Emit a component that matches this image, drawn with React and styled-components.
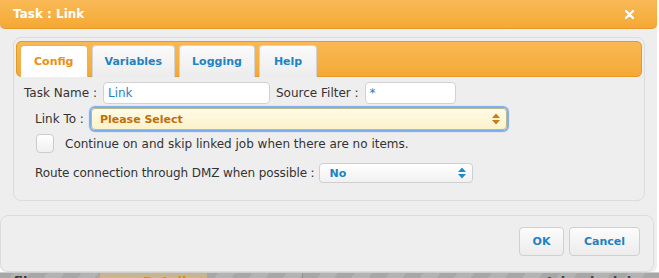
import React from 'react';
import styled, { createGlobalStyle } from 'styled-components';

const Global = createGlobalStyle`
  html, body { margin: 0; padding: 0; background: #ffffff; }
  body { font-family: "DejaVu Sans", Verdana, sans-serif; }
  * { box-sizing: border-box; }
`;

const Page = styled.div`
  width: 659px;
  height: 278px;
  overflow: hidden;
  display: flex;
  flex-direction: column;
  background: #ffffff;
`;

const Dialog = styled.div`
  flex: none;
  width: 657px;
  height: 272px;
  background: #eeeeee;
  display: flex;
  flex-direction: column;
  border-radius: 0 0 6px 6px;
`;

const TitleBar = styled.div`
  flex: none;
  height: 29px;
  display: flex;
  align-items: center;
  justify-content: space-between;
  padding: 0 23px 0 13px;
  background: linear-gradient(#f9b956, #f4a935);
  border-bottom: 1px solid #e49a25;
  border-radius: 0 0 5px 5px;
  color: #ffffff;
  font-weight: bold;
  font-size: 12px;
`;

const Close = styled.svg`
  display: block;
`;

const Body = styled.div`
  padding: 8px 12px 0 13px;
`;

const Panel = styled.div`
  height: 164px;
  border: 1px solid #dcdcdc;
  border-radius: 8px;
  padding: 3px 2px;
  background: #eeeeee;
`;

const TabBar = styled.div`
  height: 36px;
  display: flex;
  align-items: flex-end;
  gap: 4px;
  padding: 3px 3px 0 3px;
  background: linear-gradient(#f9b956, #f4a935);
  border: 1px solid #e49a25;
  border-radius: 5px;
`;

const Tab = styled.div`
  height: 32px;
  margin-bottom: -1px;
  padding: 0 ${p => p.$pad}px;
  display: flex;
  align-items: center;
  font-size: 11px;
  font-weight: bold;
  border: 1px solid ${p => (p.$active ? '#f1b04e' : '#d3d3d3')};
  border-bottom: none;
  border-radius: 4px 4px 0 0;
  color: ${p => (p.$active ? '#eb8f14' : '#1f83c0')};
  background: ${p => (p.$active ? '#ffffff' : 'linear-gradient(#fbfbfb, #ececec)')};
`;

const Form = styled.div`
  display: flex;
  flex-direction: column;
  padding: 5px 0 0 8px;
`;

const Row = styled.div`
  display: flex;
  align-items: center;
  height: ${p => p.$h}px;
  margin-top: ${p => p.$mt || 0}px;
  padding-left: ${p => p.$indent || 0}px;
`;

const Label = styled.span`
  font-size: 12px;
  color: #333333;
  white-space: nowrap;
  letter-spacing: ${p => p.$ls || 0}px;
  margin-right: ${p => p.$gap}px;
`;

const Input = styled.div`
  width: ${p => p.$w}px;
  height: 22px;
  margin-right: ${p => p.$mr || 0}px;
  background: #ffffff;
  border: 1px solid #d2d2d2;
  border-radius: 4px;
  padding: 0 4px;
  display: flex;
  align-items: center;
  font-size: 12px;
  color: #1f83c0;
`;

const Select = styled.div`
  position: relative;
  width: ${p => p.$w}px;
  height: ${p => p.$h}px;
  border-radius: 4px;
  padding: 0 ${p => p.$pad}px;
  display: flex;
  align-items: center;
  font-size: 11px;
  font-weight: bold;
  color: ${p => (p.$focus ? '#c06f08' : '#1f83c0')};
  background: ${p => (p.$focus ? 'linear-gradient(#fefae6, #fcf2cb)' : 'linear-gradient(#ffffff, #f1f1f1)')};
  border: 1px solid ${p => (p.$focus ? '#b9b98e' : '#cfcfcf')};
  box-shadow: ${p => (p.$focus ? '0 0 1px 2px rgba(102,160,235,0.85)' : 'none')};
`;

const Arrows = styled.svg`
  position: absolute;
  right: 6px;
  top: 50%;
  transform: translateY(-50%);
`;

const Check = styled.div`
  width: 18px;
  height: 19px;
  margin: 0 11px 0 1px;
  border: 1px solid #cccccc;
  border-radius: 4px;
  background: linear-gradient(#ffffff, #f0f0f0);
`;

const Footer = styled.div`
  margin-top: 14px;
  margin-right: 3px;
  flex: 1;
  border: 1px solid #dcdcdc;
  border-radius: 8px;
  display: flex;
  justify-content: flex-end;
  align-items: flex-start;
  gap: 5px;
  padding: 11px 13px 0 0;
`;

const Button = styled.div`
  width: ${p => p.$w}px;
  height: 29px;
  display: flex;
  align-items: center;
  justify-content: center;
  border: 1px solid #d0d0d0;
  border-radius: 4px;
  background: linear-gradient(#fcfcfc, #ececec);
  color: #1f83c0;
  font-size: 11px;
  font-weight: bold;
`;

const Backdrop = styled.div`
  flex: none;
  height: 6px;
  display: flex;
  overflow: hidden;
  border-top: 1px solid #cfcfcf;
  background: repeating-linear-gradient(-55deg, #a7a7a7 0 14px, #b3b3b3 14px 28px);
`;

const Seg = styled.div`
  flex: none;
  width: ${p => p.$w}px;
  background: ${p => p.$bg || 'transparent'};
  border-right: ${p => (p.$divider ? '1px solid #8e8e8e' : 'none')};
  color: ${p => p.$color || '#333'};
  font-size: 13px;
  font-weight: bold;
  line-height: 18px;
  white-space: nowrap;
  overflow: hidden;
  padding-left: ${p => p.$pl || 0}px;
`;

const ArrowIcon = ({ color }) => (
  <Arrows width="8" height="11" viewBox="0 0 8 11">
    <path d="M4 0 L8 4.5 L0 4.5 Z" fill={color} />
    <path d="M4 11 L8 6.5 L0 6.5 Z" fill={color} />
  </Arrows>
);

export default function App() {
  return (
    <Page>
      <Global />
      <Dialog>
        <TitleBar>
          <span>Task : Link</span>
          <Close width="9" height="9" viewBox="0 0 9 9">
            <path d="M1 1 L8 8 M8 1 L1 8" stroke="#ffffff" strokeWidth="2.4" strokeLinecap="round" />
          </Close>
        </TitleBar>
        <Body>
          <Panel>
            <TabBar>
              <Tab $active $pad={13}>Config</Tab>
              <Tab $pad={12}>Variables</Tab>
              <Tab $pad={12}>Logging</Tab>
              <Tab $pad={14}>Help</Tab>
            </TabBar>
            <Form>
              <Row $h={22}>
                <Label $gap={6}>Task Name :</Label>
                <Input $w={167} $mr={6}>Link</Input>
                <Label $gap={6}>Source Filter :</Label>
                <Input $w={91}>*</Input>
              </Row>
              <Row $h={22} $mt={4} $indent={11}>
                <Label $gap={7}>Link To :</Label>
                <Select $focus $w={416} $h={22} $pad={8}>
                  Please Select
                  <ArrowIcon color="#d07a10" />
                </Select>
              </Row>
              <Row $h={19} $mt={4} $indent={11}>
                <Check />
                <Label $gap={0}>Continue on and skip linked job when there are no items.</Label>
              </Row>
              <Row $h={20} $mt={10} $indent={11}>
                <Label $gap={4} $ls={-0.11}>Route connection through DMZ when possible :</Label>
                <Select $w={154} $h={20} $pad={10}>
                  No
                  <ArrowIcon color="#1f8ac8" />
                </Select>
              </Row>
            </Form>
          </Panel>
        </Body>
        <Footer>
          <Button $w={45}>OK</Button>
          <Button $w={71}>Cancel</Button>
        </Footer>
      </Dialog>
      <Backdrop>
        <Seg $w={100}>e file :</Seg>
        <Seg $w={107} $bg="#c9b58e" $color="#d88a20" $pl={43}>Details ✕</Seg>
        <Seg $w={96} $divider />
        <Seg $w={244} />
        <Seg $w={112} $color="#444">Job schedule</Seg>
      </Backdrop>
    </Page>
  );
}
